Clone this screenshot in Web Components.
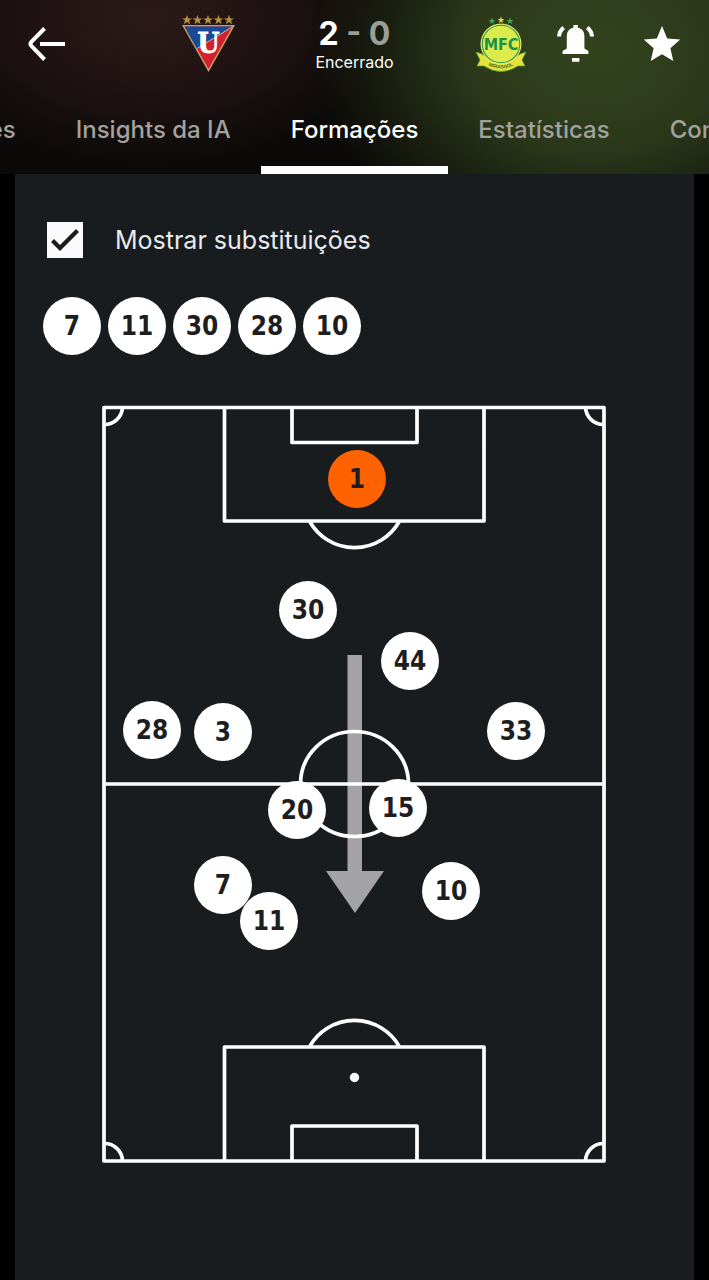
<!DOCTYPE html>
<html lang="pt-BR">

<head>
    <meta charset="UTF-8">
    <meta name="viewport" content="width=device-width, initial-scale=1.0">
    <title>Formações</title>

    <style>
        body {
            display: flex;
            flex-direction: column;
            min-height: 100vh;
            margin: 0;
            background: #000;
            color: #fff;
            font-family: Inter, "Liberation Sans", sans-serif;
        }
    </style>
</head>

<body>

    <match-header>
        <team-crest slot="home" team="ldu"></team-crest>
        <match-score home="2" away="0">Encerrado</match-score>
        <team-crest slot="away" team="mirassol"></team-crest>

        <tab-bar slot="tabs">
            <tab-link slot="before">Detalhes</tab-link>
            <tab-link slot="before">Insights da IA</tab-link>
            <tab-link active>Formações</tab-link>
            <tab-link slot="after">Estatísticas</tab-link>
            <tab-link slot="after">Confrontos</tab-link>
        </tab-bar>
    </match-header>

    <lineup-panel>
        <check-option slot="option">Mostrar substituições</check-option>

        <player-badge slot="players">7</player-badge>
        <player-badge slot="players">11</player-badge>
        <player-badge slot="players">30</player-badge>
        <player-badge slot="players">28</player-badge>
        <player-badge slot="players">10</player-badge>

        <football-pitch>
            <player-badge x="255" y="74" keeper>1</player-badge>
            <player-badge x="206" y="205">30</player-badge>
            <player-badge x="308" y="256">44</player-badge>
            <player-badge x="50" y="325">28</player-badge>
            <player-badge x="121" y="327">3</player-badge>
            <player-badge x="414" y="326">33</player-badge>
            <player-badge x="195" y="405">20</player-badge>
            <player-badge x="296" y="403">15</player-badge>
            <player-badge x="121" y="480">7</player-badge>
            <player-badge x="167" y="516">11</player-badge>
            <player-badge x="349" y="486">10</player-badge>
        </football-pitch>
    </lineup-panel>

    <script>
        class BaseElement extends HTMLElement {
            constructor() {
                super();
                this.attachShadow({ mode: 'open' });
            }

            connectedCallback() {
                this.shadowRoot.innerHTML = this.render();
            }
        }

        class MatchHeader extends BaseElement {
            render() {
                return `
                    <style>
                        :host {
                            display: block;
                            background:
                                radial-gradient(ellipse 280px 220px at 84% 28%, #33431e 0%, #2b391a 45%, rgba(35, 45, 20, 0) 100%),
                                radial-gradient(ellipse 240px 150px at 21% 10%, #2c1a1a 0%, #1f1212 50%, rgba(20, 12, 12, 0) 100%),
                                #0b0a08;
                        }
                        .top {
                            display: grid;
                            grid-template-columns: 1fr 240px 1fr;
                            align-items: center;
                            height: 88px;
                        }
                        .side {
                            display: flex;
                            align-items: center;
                            justify-content: space-between;
                        }
                        .home { padding-left: 28px; }
                        .away { padding-right: 28px; }
                        .group {
                            display: flex;
                            align-items: center;
                            gap: 29px;
                        }
                        button {
                            display: flex;
                            padding: 0;
                            border: none;
                            background: none;
                            color: inherit;
                            cursor: pointer;
                        }
                    </style>
                    <div class="top">
                        <div class="side home">
                            <button aria-label="Voltar">
                                <svg width="38" height="34" viewBox="0 0 38 34" fill="none" stroke="currentColor" stroke-width="4">
                                    <path d="M16.5 1.5 3.6 14.6Q1.4 17 3.6 19.2L16.5 32.5M12 17H37" />
                                </svg>
                            </button>
                            <slot name="home"></slot>
                        </div>
                        <slot></slot>
                        <div class="side away">
                            <div class="group">
                                <slot name="away"></slot>
                                <button aria-label="Notificações">
                                    <svg width="37" height="38" viewBox="0 0 37 38" fill="currentColor">
                                        <path d="M16.4 0h4.4v2.4Q27.4 4 27.4 11v12.6l4 2.4v3H5.6v-3l4.2-2.4V11Q9.8 4 16.4 2.4zM15 33h7.4v3.8H15z" />
                                        <path d="M5.5 1 8 4.2Q4.3 7 4 11.5H0Q.4 5 5.5 1zM31.5 1Q36.6 5 37 11.5H33Q32.7 7 29 4.2z" />
                                    </svg>
                                </button>
                            </div>
                            <button aria-label="Favorito">
                                <svg width="38" height="36" viewBox="0 0 38 36" fill="currentColor">
                                    <path d="M19 0 24.2 12.4 37.2 13.5 27.4 22.2 30.3 35 19 28.2 7.7 35 10.6 22.2 .8 13.5 13.8 12.4z" />
                                </svg>
                            </button>
                        </div>
                    </div>
                    <slot name="tabs"></slot>
                `;
            }
        }

        class MatchScore extends BaseElement {
            render() {
                return `
                    <style>
                        :host {
                            display: block;
                            text-align: center;
                            font-size: 16px;
                            line-height: 20px;
                        }
                        .score {
                            color: #9b9f95;
                            font-size: 32px;
                            font-weight: 700;
                            line-height: 36px;
                        }
                        .winner { color: #fff; }
                    </style>
                    <div class="score"><span class="winner">${this.getAttribute('home')}</span> - ${this.getAttribute('away')}</div>
                    <slot></slot>
                `;
            }
        }

        const STAR = 'M0-5.2 1.2-1.6H5L2 .6 3.1 4.2 0 2-3.1 4.2-2 .6-5-1.6H-1.2z';

        const CRESTS = {
            ldu: `
                <g fill="#b3943a">
                    ${[5, 15.5, 26, 36.5, 47].map(x => `<path transform="translate(${x} 5)" d="${STAR}" />`).join('')}
                </g>
                <path d="M0 10H53L26.5 57z" fill="#c4a264" />
                <path d="M2.5 11.5H50.5L26.5 54z" fill="#d3202c" />
                <path d="M2.5 11.5H50.5L15 34z" fill="#174a98" />
                <path d="M15 33.5 50 12" stroke="#d8b7a0" stroke-width="1" />
                <text x="26.5" y="38" text-anchor="middle" font-family="'DejaVu Serif Condensed', 'DejaVu Serif', serif" font-size="28" font-weight="700" fill="#fff" stroke="#fff" stroke-width=".8">U</text>
            `,
            mirassol: `
                <g transform="translate(26 5)">
                    <path transform="translate(-9 1) scale(.7)" d="${STAR}" fill="#45a653" />
                    <path transform="scale(.7)" d="${STAR}" fill="#d9dc4a" />
                    <path transform="translate(9 1) scale(.7)" d="${STAR}" fill="#45a653" />
                </g>
                <path d="M1 37 7 39Q26 55 45 39L51 37 47 45 50 51 43 51Q26 62 9 51L2 51 5 45z" fill="#e6e33c" stroke="#4a9b3b" stroke-width=".7" />
                <circle cx="26" cy="29" r="20.5" fill="#e8ec6a" />
                <circle cx="26" cy="29" r="19.3" fill="#24934a" />
                <circle cx="26" cy="29" r="18.3" fill="#dcea4c" />
                <text x="26" y="35" text-anchor="middle" font-family="'DejaVu Sans Condensed', 'DejaVu Sans', sans-serif" font-size="16" font-weight="700" fill="#16924a">MFC</text>
                <path id="ribbon" d="M9 48Q26 59 43 48" fill="none" />
                <text font-family="'Liberation Sans', sans-serif" font-size="5" font-weight="700" fill="#4b6b22" text-anchor="middle"><textPath href="#ribbon" startOffset="50%">MIRASSOL</textPath></text>
            `
        };

        class TeamCrest extends BaseElement {
            render() {
                return `
                    <style>
                        :host { display: block; }
                        svg { display: block; }
                    </style>
                    <svg width="53" height="58" viewBox="0 0 53 58">${CRESTS[this.getAttribute('team')]}</svg>
                `;
            }
        }

        class TabBar extends BaseElement {
            render() {
                return `
                    <style>
                        :host {
                            display: grid;
                            grid-template-columns: 1fr auto 1fr;
                            height: 86px;
                        }
                        div {
                            display: flex;
                            min-width: 0;
                            overflow: hidden;
                        }
                        .before { justify-content: flex-end; }
                    </style>
                    <div class="before"><slot name="before"></slot></div>
                    <div><slot></slot></div>
                    <div><slot name="after"></slot></div>
                `;
            }
        }

        class TabLink extends BaseElement {
            render() {
                return `
                    <style>
                        :host {
                            display: flex;
                            flex: none;
                        }
                        a {
                            box-sizing: border-box;
                            padding: 26px 30px;
                            border-bottom: 8px solid transparent;
                            color: #a3a29f;
                            font-size: 24px;
                            font-weight: 500;
                            line-height: 32px;
                            text-decoration: none;
                            white-space: nowrap;
                        }
                        :host([active]) a {
                            border-color: #fff;
                            color: #fff;
                        }
                    </style>
                    <a href="#"><slot></slot></a>
                `;
            }
        }

        class LineupPanel extends BaseElement {
            render() {
                return `
                    <style>
                        :host {
                            display: flex;
                            flex: 1;
                            flex-direction: column;
                            margin: 0 15px;
                            padding: 48px 28px;
                            background: #181c1f;
                        }
                        .players {
                            display: flex;
                            gap: 7px;
                            margin: 39px 0 50px;
                        }
                    </style>
                    <slot name="option"></slot>
                    <div class="players"><slot name="players"></slot></div>
                    <slot></slot>
                `;
            }
        }

        class CheckOption extends BaseElement {
            render() {
                return `
                    <style>
                        :host { display: block; }
                        label {
                            display: flex;
                            align-items: center;
                            gap: 32px;
                            padding: 0 4px;
                            color: #e9eaeb;
                            font-size: 25px;
                            line-height: 36px;
                        }
                        input {
                            appearance: none;
                            width: 36px;
                            height: 36px;
                            margin: 0;
                            background: #fbfbfd;
                        }
                        input:checked::before {
                            content: "";
                            display: block;
                            height: 36px;
                            background: #1a1c20;
                            clip-path: polygon(4px 20px, 7px 17px, 13px 23px, 29px 7px, 32px 10px, 13px 29px);
                        }
                    </style>
                    <label><input type="checkbox" checked><slot></slot></label>
                `;
            }
        }

        class PlayerBadge extends BaseElement {
            render() {
                return `
                    <style>
                        :host {
                            display: flex;
                            align-items: center;
                            justify-content: center;
                            width: 58px;
                            height: 58px;
                            border-radius: 50%;
                            background: #fff;
                            color: #1e1e20;
                            font: 700 26px/32px "DejaVu Sans Condensed", "DejaVu Sans", sans-serif;
                        }
                        :host([keeper]) { background: #ff6200; }
                    </style>
                    <slot></slot>
                `;
            }
        }

        class FootballPitch extends BaseElement {
            connectedCallback() {
                super.connectedCallback();
                this.placePlayers();
            }

            // x and y are in the units of the pitch drawing
            placePlayers() {
                this.querySelectorAll('player-badge').forEach(player => {
                    player.style.left = `${player.getAttribute('x') / 504 * 100}%`;
                    player.style.top = `${player.getAttribute('y') / 758 * 100}%`;
                });
            }

            render() {
                return `
                    <style>
                        :host {
                            display: block;
                            position: relative;
                            margin: 0 60px 0 59px;
                        }
                        svg {
                            display: block;
                            width: 100%;
                        }
                        ::slotted(player-badge) {
                            position: absolute;
                            transform: translate(-50%, -50%);
                        }
                    </style>
                    <svg viewBox="0 0 504 758" fill="none" stroke="#fff" stroke-width="3.7" stroke-linejoin="round">
                        <path d="M245.5 250H260V466H282L253 508 224 466H245.5z" fill="#a3a3a5" stroke="none" />
                        <path d="M2 2.5H502V756H2zM2 379H502" />
                        <ellipse cx="252.5" cy="379" rx="54" ry="52.5" />
                        <path d="M122.5 2V116H382V2M190 2V37.5H315V2M208 117A51.5 51.5 0 0 0 297 117" />
                        <path d="M122.5 756V642H382V756M190 756V721H315V756M208 641A51.5 51.5 0 0 1 297 641" />
                        <path d="M2 19.5A18 18 0 0 0 20.5 2M502 19.5A18 18 0 0 1 483.5 2M2 738.5A18 18 0 0 1 20.5 756M502 738.5A18 18 0 0 0 483.5 756" />
                        <circle cx="252.5" cy="672.5" r="4.7" fill="#fff" stroke="none" />
                    </svg>
                    <slot></slot>
                `;
            }
        }

        customElements.define('match-header', MatchHeader);
        customElements.define('match-score', MatchScore);
        customElements.define('team-crest', TeamCrest);
        customElements.define('tab-bar', TabBar);
        customElements.define('tab-link', TabLink);
        customElements.define('lineup-panel', LineupPanel);
        customElements.define('check-option', CheckOption);
        customElements.define('player-badge', PlayerBadge);
        customElements.define('football-pitch', FootballPitch);
    </script>
</body>

</html>
